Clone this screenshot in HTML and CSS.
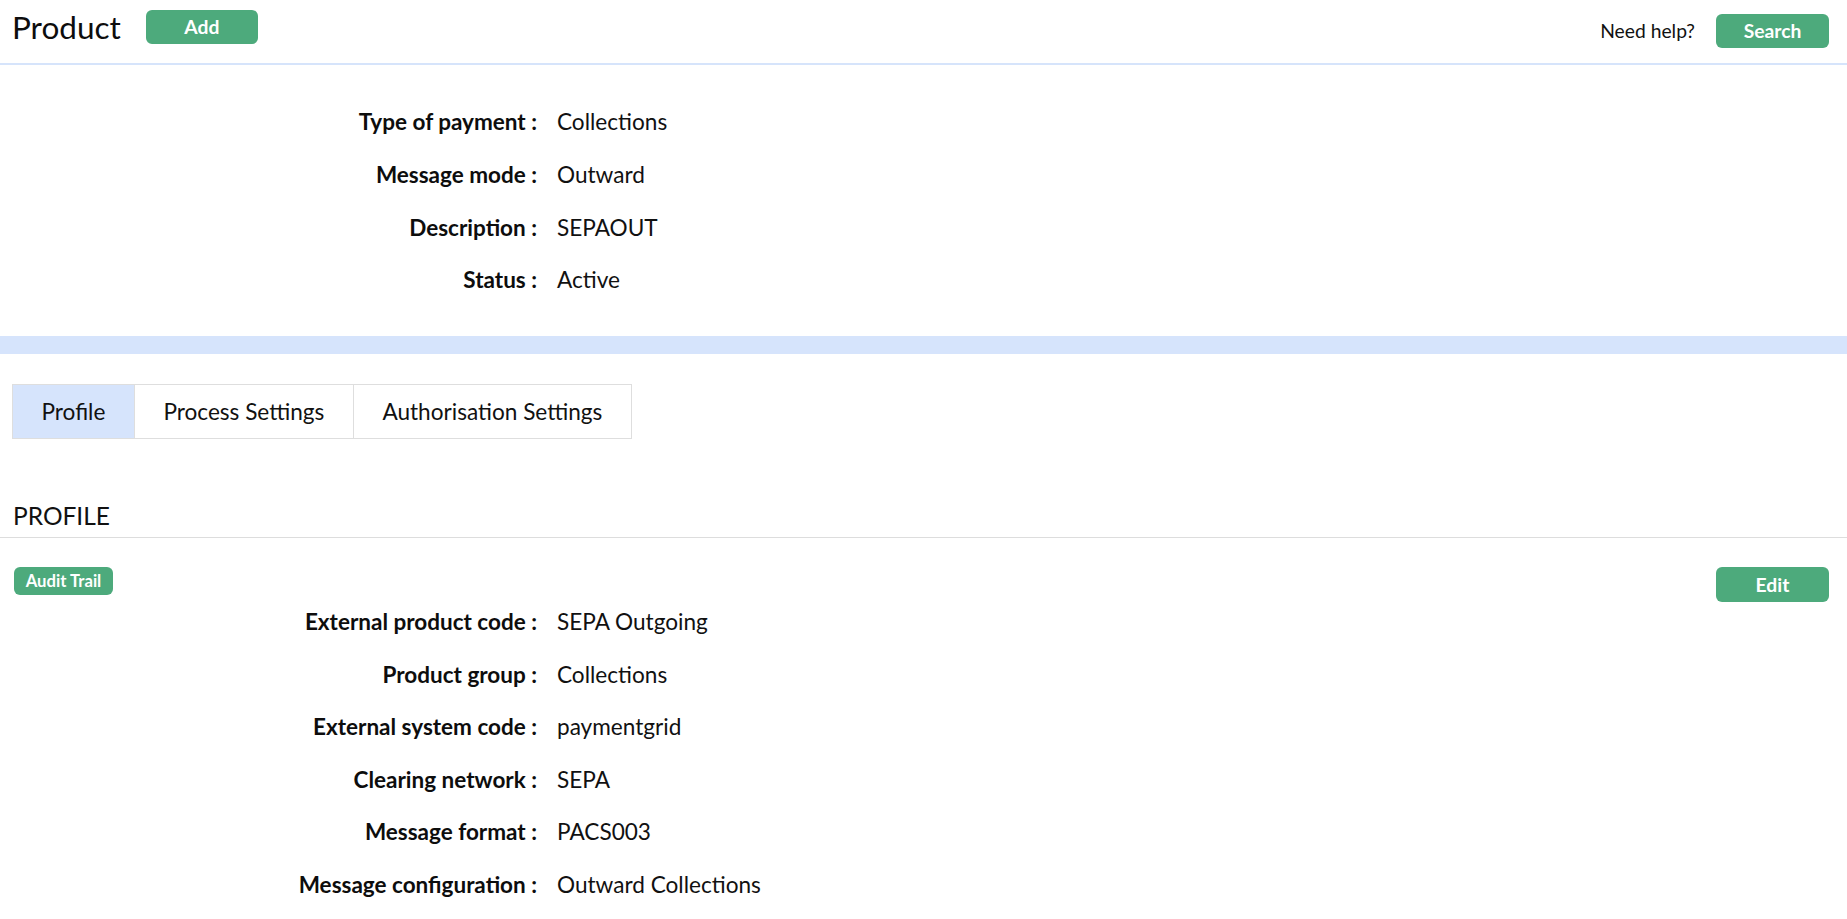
FILE: index.html
```html
<!DOCTYPE html>
<html lang="en">
<head>
<meta charset="utf-8">
<title>Product</title>
<link rel="stylesheet" href="styles.css">
</head>
<body>
<header class="topbar">
  <div class="topbar-left">
    <h1 class="page-title">Product</h1>
    <button class="btn btn-md btn-add" type="button">Add</button>
  </div>
  <div class="topbar-right">
    <span class="help-text">Need help?</span>
    <button class="btn btn-md btn-search" type="button">Search</button>
  </div>
</header>

<section class="summary">
  <dl class="fields">
    <dt class="field-label">Type of payment :</dt><dd class="field-value">Collections</dd>
    <dt class="field-label">Message mode :</dt><dd class="field-value">Outward</dd>
    <dt class="field-label">Description :</dt><dd class="field-value">SEPAOUT</dd>
    <dt class="field-label">Status :</dt><dd class="field-value">Active</dd>
  </dl>
</section>

<div class="band"></div>

<nav class="tabs">
  <a class="tab tab-active">Profile</a>
  <a class="tab">Process Settings</a>
  <a class="tab">Authorisation Settings</a>
</nav>

<h2 class="section-title">PROFILE</h2>

<div class="actions">
  <button class="btn btn-sm" type="button">Audit Trail</button>
  <button class="btn btn-md btn-edit" type="button">Edit</button>
</div>

<section class="details">
  <dl class="fields fields-details">
    <dt class="field-label">External product code :</dt><dd class="field-value">SEPA Outgoing</dd>
    <dt class="field-label">Product group :</dt><dd class="field-value">Collections</dd>
    <dt class="field-label">External system code :</dt><dd class="field-value">paymentgrid</dd>
    <dt class="field-label">Clearing network :</dt><dd class="field-value">SEPA</dd>
    <dt class="field-label">Message format :</dt><dd class="field-value">PACS003</dd>
    <dt class="field-label">Message configuration :</dt><dd class="field-value">Outward Collections</dd>
  </dl>
</section>
</body>
</html>
```
FILE: styles.css
```css
* { box-sizing: border-box; }

html, body {
  margin: 0;
  padding: 0;
  background: #ffffff;
  color: #111111;
  font-family: Lato, "Liberation Sans", sans-serif;
}

body { padding-bottom: 10px; }

/* Top bar */
.topbar {
  display: flex;
  justify-content: space-between;
  align-items: flex-start;
  height: 65px;
  padding: 0 18px 0 12px;
  border-bottom: 2px solid #d6e4fb;
}

.topbar-left {
  display: flex;
  align-items: center;
  gap: 25px;
  margin-top: 10px;
  height: 34px;
}

.topbar-right {
  display: flex;
  align-items: center;
  gap: 21px;
  margin-top: 14px;
  height: 34px;
}

.page-title {
  margin: 0;
  font-size: 31.5px;
  font-weight: 400;
  line-height: 34px;
  color: #0d0d0d;
}

.help-text {
  font-size: 19.3px;
  color: #111;
  line-height: 34px;
}

/* Buttons */
.btn {
  border: none;
  background: #4daa7c;
  color: #fff;
  font-family: Lato, "Liberation Sans", sans-serif;
  font-weight: 700;
  padding: 0;
  cursor: pointer;
  flex: none;
}

.btn-md {
  height: 34px;
  border-radius: 6px;
  font-size: 19.3px;
  line-height: 34px;
}

.btn-add { width: 112px; }
.btn-search { width: 113px; }
.btn-edit { width: 113px; height: 35px; }

.btn-sm {
  width: 99px;
  height: 28px;
  border-radius: 6px;
  font-size: 16.7px;
  line-height: 28px;
}

/* Field lists */
.fields {
  display: grid;
  grid-template-columns: 537px 1fr;
  column-gap: 20px;
  margin: 0;
}

.field-label {
  text-align: right;
  font-weight: 700;
  font-size: 22.5px;
  line-height: 52.8px;
  color: #0d0d0d;
  white-space: nowrap;
}

.field-value {
  margin: 0;
  font-size: 22.6px;
  line-height: 52.8px;
  color: #111;
  white-space: nowrap;
}

.fields-details .field-label,
.fields-details .field-value {
  line-height: 52.5px;
}

.summary {
  padding: 31px 0 29px;
}

.band {
  height: 18px;
  background: #d6e4fc;
}

/* Tabs */
.tabs {
  display: flex;
  margin: 30px 0 0 12px;
}

.tab {
  display: block;
  padding: 0 28.5px;
  height: 55px;
  line-height: 53px;
  font-size: 22.6px;
  color: #111;
  border: 1px solid #dedede;
  border-left-width: 0;
  background: #fff;
}

.tab:first-child { border-left-width: 1px; }

.tab-active { background: #d6e4fc; }

/* Section heading */
.section-title {
  margin: 62px 0 0;
  padding: 0 0 6px 13px;
  font-size: 24.5px;
  font-weight: 400;
  line-height: 30px;
  color: #111;
  border-bottom: 1px solid #dddddd;
}

.actions {
  display: flex;
  justify-content: space-between;
  align-items: flex-start;
  height: 29px;
  margin-top: 29px;
  padding: 0 18px 0 14px;
}

.details { padding: 0; }
```
